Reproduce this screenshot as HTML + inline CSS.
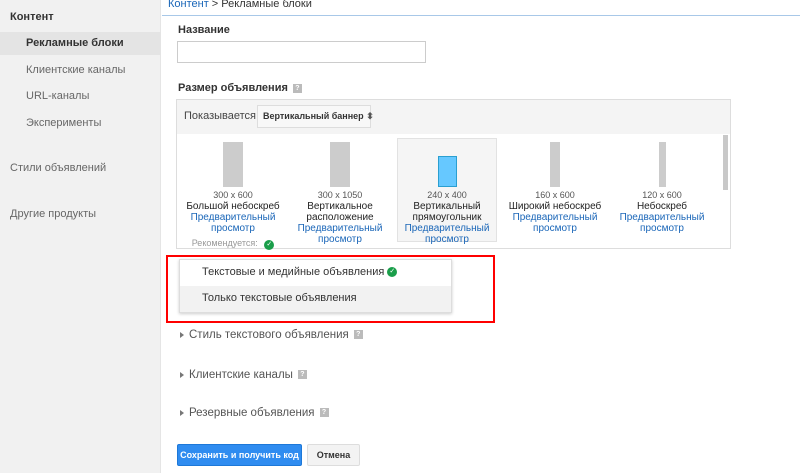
<!DOCTYPE html>
<html><head><meta charset="utf-8"><style>
*{box-sizing:border-box;margin:0;padding:0}
body{width:800px;height:473px;overflow:hidden;background:#fff;font-family:"Liberation Sans",Arial,sans-serif;position:relative;color:#222}
.a{position:absolute}
.side{left:0;top:0;width:161px;height:473px;background:#f1f1f1;border-right:1px solid #e5e5e5}
.side div{position:absolute;font-size:11px;color:#666}
.lbl{font-size:11px;font-weight:bold;color:#333}
.q{display:inline-block;width:9px;height:9px;background:#bbb;color:#fff;font-size:7px;text-align:center;line-height:9px;vertical-align:middle;margin-left:5px;font-weight:bold}
.col{position:absolute;top:138px;width:100px;height:104px;text-align:center;font-size:10px;line-height:11px}
.col .r{margin:4px auto 0;background:#ccc}
.sz{color:#555;font-size:9px;margin-top:3px}
.lk{color:#1a66b8}
.sec{font-size:11.5px;color:#555;left:180px;white-space:nowrap}
.sec:before{content:"";display:inline-block;border-left:4px solid #777;border-top:3px solid transparent;border-bottom:3px solid transparent;margin-right:5px;vertical-align:middle}
</style></head><body>
<div class="a side">
<div style="left:10px;top:11px;font-weight:bold;color:#333">Контент</div>
<div style="left:0;top:32px;width:161px;height:23px;background:#e4e4e4"></div>
<div style="left:26px;top:37px;font-weight:bold;color:#333">Рекламные блоки</div>
<div style="left:26px;top:64px">Клиентские каналы</div>
<div style="left:26px;top:90px">URL-каналы</div>
<div style="left:26px;top:117px">Эксперименты</div>
<div style="left:10px;top:162px">Стили объявлений</div>
<div style="left:10px;top:208px">Другие продукты</div>
</div>
<div class="a" style="left:168px;top:-2px;font-size:11px;color:#333"><span style="color:#1a66b8">Контент</span> &gt; Рекламные блоки</div>
<div class="a" style="left:162px;top:15px;width:638px;height:1px;background:#a8c8e8"></div>
<div class="a lbl" style="left:178px;top:24px">Название</div>
<div class="a" style="left:177px;top:41px;width:249px;height:22px;border:1px solid #ccc"></div>
<div class="a lbl" style="left:178px;top:82px">Размер объявления<span class="q">?</span></div>
<div class="a" style="left:176px;top:99px;width:555px;height:150px;border:1px solid #ddd"></div>
<div class="a" style="left:177px;top:100px;width:553px;height:34px;background:#f4f4f4"></div>
<div class="a" style="left:184px;top:110px;font-size:11px;color:#444;white-space:nowrap">Показывается</div>
<div class="a" style="left:257px;top:105px;width:114px;height:23px;border:1px solid #ddd;background:#f8f8f8;font-size:9px;font-weight:bold;line-height:21px;padding-left:5px;color:#333;white-space:nowrap">Вертикальный баннер <span style="font-size:9px;color:#555">⬍</span></div>
<div class="a" style="left:723px;top:135px;width:5px;height:55px;background:#c8c8c8"></div>
<div class="col" style="left:183px"><div class="r" style="width:20px;height:45px"></div><div class="sz">300 x 600</div><div>Большой небоскреб</div><div class="lk">Предварительный<br>просмотр</div><div style="color:#999;font-size:9px;margin-top:4px">Рекомендуется: <span style="display:inline-block;width:10px;height:10px;border-radius:50%;background:#1a9e4a;color:#fff;font-size:7px;line-height:10px;margin-left:4px">✓</span></div></div>
<div class="col" style="left:290px"><div class="r" style="width:20px;height:45px"></div><div class="sz">300 x 1050</div><div>Вертикальное<br>расположение</div><div class="lk">Предварительный<br>просмотр</div></div>
<div class="col" style="left:397px;background:#f5f5f5;border:1px solid #e2e2e2"><div class="r" style="width:19px;height:31px;margin-top:17px;background:#66c8ff;border:1px solid #2a9fd0"></div><div class="sz">240 x 400</div><div>Вертикальный<br>прямоугольник</div><div class="lk">Предварительный<br>просмотр</div></div>
<div class="col" style="left:505px"><div class="r" style="width:10px;height:45px"></div><div class="sz">160 x 600</div><div>Широкий небоскреб</div><div class="lk">Предварительный<br>просмотр</div></div>
<div class="col" style="left:612px"><div class="r" style="width:7px;height:45px"></div><div class="sz">120 x 600</div><div>Небоскреб</div><div class="lk">Предварительный<br>просмотр</div></div>
<div class="a" style="left:166px;top:255px;width:329px;height:68px;border:2px solid #f00"></div>
<div class="a" style="left:179px;top:259px;width:273px;height:54px;background:#fff;border:1px solid #ddd;box-shadow:0 1px 3px rgba(0,0,0,.2)">
<div style="height:26px;line-height:24px;padding-left:22px;font-size:11px;color:#333">Текстовые и медийные объявления <span style="display:inline-block;width:10px;height:10px;border-radius:50%;background:#1a9e4a;color:#fff;font-size:7px;line-height:10px;text-align:center;vertical-align:middle">✓</span></div>
<div style="height:26px;line-height:24px;padding-left:22px;font-size:11px;color:#333;background:#f2f2f2">Только текстовые объявления</div>
</div>
<div class="a sec" style="top:329px">Стиль текстового объявления<span class="q">?</span></div>
<div class="a sec" style="top:369px">Клиентские каналы<span class="q">?</span></div>
<div class="a sec" style="top:407px">Резервные объявления<span class="q">?</span></div>
<div class="a" style="left:177px;top:444px;width:125px;height:22px;background:#2f8cf0;border:1px solid #1d78d8;color:#fff;font-size:9px;font-weight:bold;text-align:center;line-height:20px;border-radius:2px">Сохранить и получить код</div>
<div class="a" style="left:307px;top:444px;width:53px;height:22px;background:#f3f3f3;border:1px solid #ddd;color:#333;font-size:9px;font-weight:bold;text-align:center;line-height:20px;border-radius:2px">Отмена</div>
</body></html>
